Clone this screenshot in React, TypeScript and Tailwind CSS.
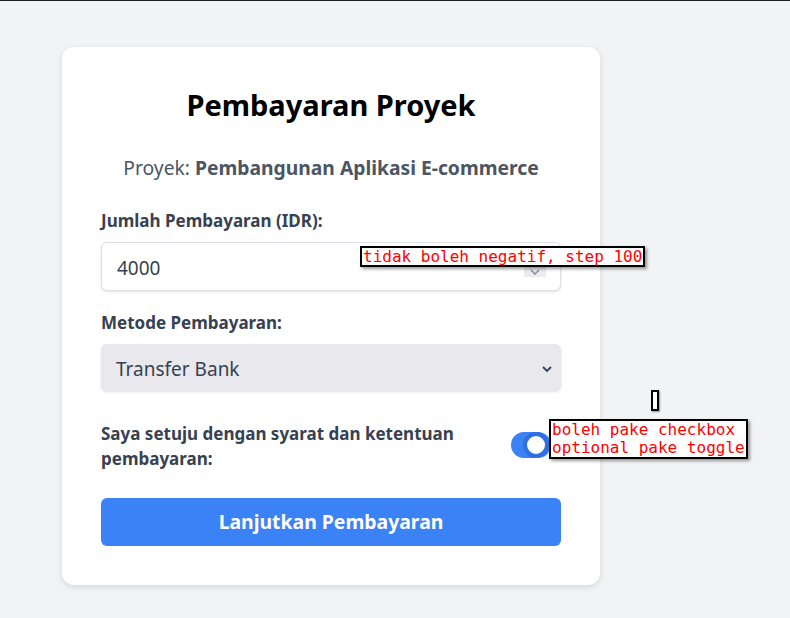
import React from "react";

const mono = { fontFamily: '"DejaVu Sans Mono", monospace' };

function Field({ label, children }: { label: string; children: React.ReactNode }) {
  return (
    <div className="flex flex-col gap-[9px]">
      <label className="text-[17px] font-bold leading-[24px] text-[#374151]">{label}</label>
      {children}
    </div>
  );
}

export default function App() {
  return (
    <div
      className="relative min-h-[618px] w-[790px] border-t border-[#1f1f1f] bg-[#f2f3f5] pl-[62px] pt-[46px]"
      style={{ fontFamily: '"Noto Sans", "Open Sans", sans-serif' }}
    >
      <div className="flex w-[538px] flex-col rounded-xl bg-white px-[39px] pb-[39px] pt-[40px] shadow-[0_2px_6px_rgba(0,0,0,0.12)]">
        <h1 className="text-center text-[29px] font-bold leading-[36px] text-black">
          Pembayaran Proyek
        </h1>
        <p className="mt-[31px] text-center text-[19.3px] leading-[28px] text-[#4b5563]">
          Proyek: <span className="font-bold">Pembangunan Aplikasi E-commerce</span>
        </p>

        <div className="mt-[27px] flex flex-col gap-[20px]">
          <Field label="Jumlah Pembayaran (IDR):">
            <div className="relative flex h-[49px] items-center rounded-md border border-[#dcdfe4] bg-white px-[15px] pt-[3px] shadow-sm">
              <span className="text-[19px] text-[#374151]">4000</span>
              <div className="absolute right-[14px] top-[10px] flex h-[24px] w-[22px] flex-col items-center justify-end bg-[#ececf0] pb-[2px]">
                <svg width="10" height="6" viewBox="0 0 10 6" fill="none">
                  <path d="M1 1l4 4 4-4" stroke="#8a8f99" strokeWidth="1.5" />
                </svg>
              </div>
            </div>
          </Field>

          <Field label="Metode Pembayaran:">
            <div className="flex h-[47px] items-center justify-between rounded-md bg-[#e8e8ed] pl-[15px] pr-[8px] pt-[3px] shadow-sm">
              <span className="text-[19px] text-[#374151]">Transfer Bank</span>
              <svg width="12" height="8" viewBox="0 0 12 8" fill="none">
                <path d="M2 2l4 4 4-4" stroke="#374151" strokeWidth="1.8" />
              </svg>
            </div>
          </Field>
        </div>

        <div className="mt-[30px] flex items-center justify-between">
          <p className="w-[390px] text-[17px] font-bold leading-[25px] text-[#374151]">
            Saya setuju dengan syarat dan ketentuan pembayaran:
          </p>
          <div className="relative mr-[10px] mt-[-2px] h-[26px] w-[40px] rounded-full bg-[#3b82f6]">
            <div className="absolute right-[2px] top-0 h-[26px] w-[26px] rounded-full border-[4px] border-[#2f6fe0] bg-white" />
          </div>
        </div>

        <button className="mt-[27px] flex h-[48px] w-full items-center justify-center rounded-md bg-[#3b82f6] text-[19.4px] font-bold text-white">
          Lanjutkan Pembayaran
        </button>
      </div>

      {/* annotations overlaid on the screenshot */}
      <div
        className="absolute left-[360px] top-[245px] border-2 border-black bg-white px-[1px] text-[16px] leading-[17px] text-[#ff0000] shadow-[2px_2px_3px_rgba(0,0,0,0.4)]"
        style={mono}
      >
        tidak boleh negatif, step 100
      </div>
      <div className="absolute left-[651px] top-[389px] h-[21px] w-[8px] border-2 border-black bg-white shadow-[1px_1px_2px_rgba(0,0,0,0.4)]" />
      <div
        className="absolute left-[549px] top-[418px] w-[199px] border-2 border-black bg-white px-[1px] text-[16px] leading-[18px] text-[#ff0000] shadow-[2px_2px_3px_rgba(0,0,0,0.4)]"
        style={mono}
      >
        boleh pake checkbox
        <br />
        optional pake toggle
      </div>
    </div>
  );
}
